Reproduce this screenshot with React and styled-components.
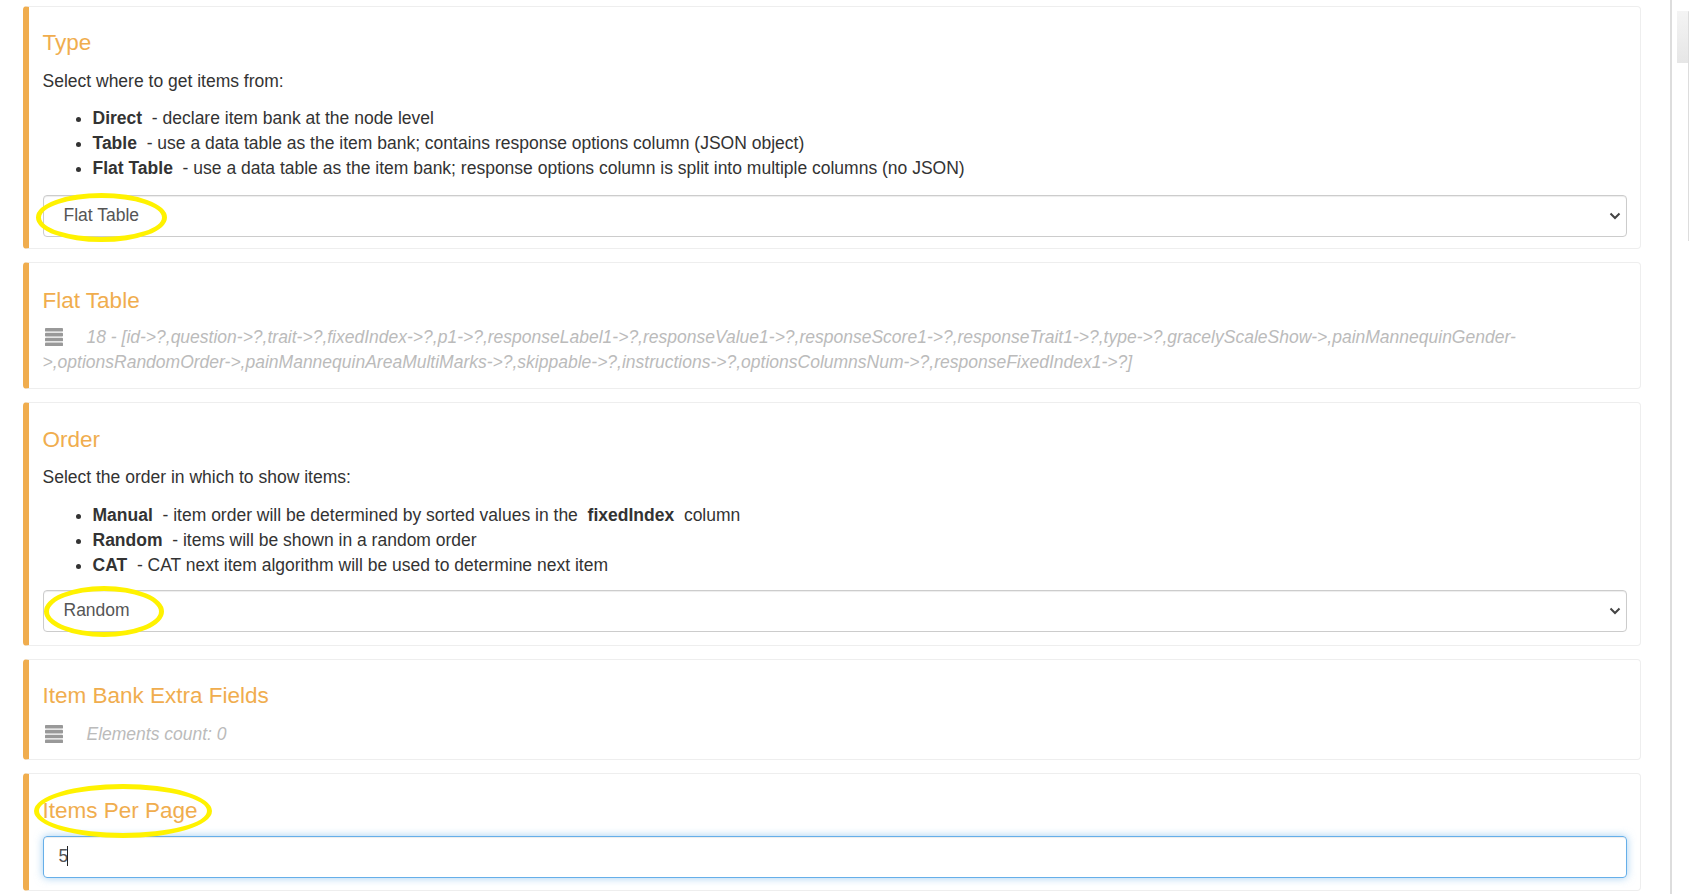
import React from "react";
import styled, { createGlobalStyle } from "styled-components";

const GlobalStyle = createGlobalStyle`
  html, body {
    margin: 0;
    height: 894px;
    overflow: hidden;
    background: #fff;
  }
  body {
    font-family: "Liberation Sans", Arial, sans-serif;
    font-size: 17.5px;
    line-height: 25px;
    color: #333;
  }
`;

const Page = styled.div`
  display: flex;
  height: 894px;
`;

const Main = styled.div`
  width: 1672px;
  box-sizing: border-box;
  padding: 6px 29px 0 23px;
  display: flex;
  flex-direction: column;
  gap: 13px;
  border-right: 2px solid #ddd;
`;

const Rail = styled.div`
  display: flex;
  align-items: flex-start;
  padding: 11px 0 0 5px;
`;

const Thumb = styled.div`
  width: 11px;
  height: 52px;
  background: linear-gradient(#f4f4f4, #e6e6e6);
`;

const Track = styled.div`
  width: 1px;
  height: 230px;
  background: #ddd;
  border-top-right-radius: 3px;
`;

const Card = styled.section`
  position: relative;
  box-sizing: border-box;
  height: ${({ $h }) => $h}px;
  padding: ${({ $top }) => $top}px 13px 0 13.5px;
  border: 1px solid #eee;
  border-left: 6px solid #f0ad4e;
  border-radius: 4px;
`;

const Title = styled.h4`
  margin: 0 0 ${({ $mb = 13 }) => $mb}px;
  font-size: 22.5px;
  line-height: 25px;
  font-weight: 400;
  color: #f0ad4e;
`;

const Text = styled.p`
  margin: 0 0 ${({ $mb = 12.5 }) => $mb}px;
`;

const List = styled.ul`
  margin: 0 0 ${({ $mb }) => $mb}px;
  padding-left: 50px;
`;

const Item = styled.li`
  line-height: 25px;
`;

const SelectBox = styled.div`
  position: relative;
  height: 42px;
  box-sizing: border-box;
  border: 1px solid #ccc;
  border-radius: 4px;
  padding: 7px 20px;
  color: #555;
  box-shadow: inset 0 1px 1px rgba(0, 0, 0, 0.075);
`;

const Chevron = styled.svg`
  position: absolute;
  right: 5px;
  top: 15px;
  width: 12px;
  height: 10px;
`;

const Input = styled.div`
  height: 42px;
  box-sizing: border-box;
  border: 1px solid #66afe9;
  border-radius: 4px;
  padding: 7px 15px;
  color: #555;
  box-shadow: inset 0 1px 1px rgba(0, 0, 0, 0.075), 0 0 8px rgba(102, 175, 233, 0.6);
`;

const Caret = styled.span`
  display: inline-block;
  width: 1px;
  height: 20px;
  margin-left: -1px;
  background: #222;
  vertical-align: -4px;
`;

const Meta = styled.div`
  color: #bbb;
  font-style: italic;
  line-height: 25px;
`;

const ListIcon = styled.svg`
  float: left;
  width: 18px;
  height: 18px;
  margin: 3px 24px 0 2px;
  color: #999;
`;

const Ring = styled.div`
  position: absolute;
  left: ${({ $x }) => $x}px;
  top: ${({ $y }) => $y}px;
  width: ${({ $w }) => $w}px;
  height: ${({ $h }) => $h}px;
  box-sizing: border-box;
  border: 5px solid #fff200;
  border-radius: 50%;
  pointer-events: none;
`;

const Lines = () => (
  <ListIcon viewBox="0 0 17 17" fill="currentColor">
    <rect x="0" y="0" width="17" height="3.4" rx="0.8" />
    <rect x="0" y="4.6" width="17" height="3.4" rx="0.8" />
    <rect x="0" y="9.2" width="17" height="3.4" rx="0.8" />
    <rect x="0" y="13.6" width="17" height="3.4" rx="0.8" />
  </ListIcon>
);

const Select = ({ value }) => (
  <SelectBox>
    {value}
    <Chevron viewBox="0 0 12 10">
      <path d="M1.5 2.5 6 7l4.5-4.5" fill="none" stroke="#444" strokeWidth="2" />
    </Chevron>
  </SelectBox>
);

export default function App() {
  return (
    <Page>
      <GlobalStyle />
      <Main>
        <Card $h={243} $top={23}>
          <Title $mb={14}>Type</Title>
          <Text $mb={11.5}>Select where to get items from:</Text>
          <List $mb={14}>
            <Item><b>Direct</b>&nbsp; - declare item bank at the node level</Item>
            <Item><b>Table</b>&nbsp; - use a data table as the item bank; contains response options column (JSON object)</Item>
            <Item><b>Flat Table</b>&nbsp; - use a data table as the item bank; response options column is split into multiple columns (no JSON)</Item>
          </List>
          <Select value="Flat Table" />
          <Ring $x={7} $y={186} $w={131} $h={49} />
        </Card>
        <Card $h={127} $top={25}>
          <Title $mb={12}>Flat Table</Title>
          <Meta>
            <Lines />
            18 - [id-&gt;?,question-&gt;?,trait-&gt;?,fixedIndex-&gt;?,p1-&gt;?,responseLabel1-&gt;?,responseValue1-&gt;?,responseScore1-&gt;?,responseTrait1-&gt;?,type-&gt;?,gracelyScaleShow-&gt;,painMannequinGender-&gt;,optionsRandomOrder-&gt;,painMannequinAreaMultiMarks-&gt;?,skippable-&gt;?,instructions-&gt;?,optionsColumnsNum-&gt;?,responseFixedIndex1-&gt;?]
          </Meta>
        </Card>
        <Card $h={244} $top={24}>
          <Title>Order</Title>
          <Text>Select the order in which to show items:</Text>
          <List $mb={12}>
            <Item><b>Manual</b>&nbsp; - item order will be determined by sorted values in the&nbsp; <b>fixedIndex</b>&nbsp; column</Item>
            <Item><b>Random</b>&nbsp; - items will be shown in a random order</Item>
            <Item><b>CAT</b>&nbsp; - CAT next item algorithm will be used to determine next item</Item>
          </List>
          <Select value="Random" />
          <Ring $x={15} $y={183} $w={120} $h={51} />
        </Card>
        <Card $h={101} $top={23}>
          <Title $mb={14}>Item Bank Extra Fields</Title>
          <Meta>
            <Lines />
            Elements count: 0
          </Meta>
        </Card>
        <Card $h={118} $top={24}>
          <Title>Items Per Page</Title>
          <Input>5<Caret /></Input>
          <Ring $x={5} $y={10} $w={178} $h={54} />
        </Card>
      </Main>
      <Rail>
        <Thumb />
        <Track />
      </Rail>
    </Page>
  );
}
